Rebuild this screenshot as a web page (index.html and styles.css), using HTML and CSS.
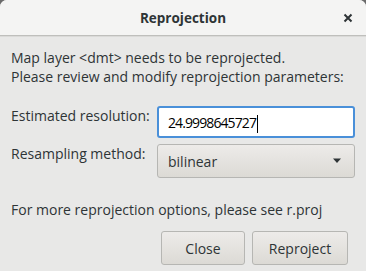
FILE: index.html
```html
<!DOCTYPE html>
<html lang="en">
  <head>
    <meta charset="UTF-8" />
    <title>Reprojection</title>
    <link rel="stylesheet" href="styles.css">
  </head>
  <body>
    <div class="dialog">
      <div class="titlebar">
        <span class="title">Reprojection</span>
        <span class="close">
          <svg width="10" height="10" viewBox="0 0 10 10">
            <path d="M1.5 1.5 L8.5 8.5 M8.5 1.5 L1.5 8.5" stroke="#2e3436" stroke-width="2" />
          </svg>
        </span>
      </div>

      <div class="content">
        <p class="message">
          Map layer &lt;dmt&gt; needs to be reprojected.<br>
          Please review and modify reprojection parameters:
        </p>

        <div class="form">
          <label class="label">Estimated resolution:</label>
          <div class="entry">24.9998645727<span class="caret"></span></div>

          <label class="label">Resampling method:</label>
          <div class="combo">
            <span>bilinear</span>
            <svg width="10" height="6" viewBox="0 0 10 6">
              <path d="M1 0.5 L9 0.5 L5 5 Z" fill="#2e3436" />
            </svg>
          </div>
        </div>

        <p class="hint">For more reprojection options, please see r.proj</p>

        <div class="actions">
          <button class="btn btn-close">Close</button>
          <button class="btn btn-reproject">Reproject</button>
        </div>
      </div>
    </div>
  </body>
</html>
```

FILE: styles.css
```css
html {
  background-color: #6b6b6b;
}

body {
  font-family: "Open Sans", "Noto Sans", sans-serif;
  font-size: 14px;
  color: #2e3436;
  margin: 0;
  padding: 0;
}

.dialog {
  width: 366px;
  height: 271px;
  background-color: #e8e8e7;
  border-radius: 7px 7px 0 0;
  overflow: hidden;
}

.titlebar {
  height: 35px;
  display: flex;
  align-items: center;
  justify-content: center;
  position: relative;
  background-color: #f4f4f3;
  border-bottom: 1px solid #bfbfbc;
  box-shadow: 0 1px 0 #dadad8;
}

.title {
  font-weight: bold;
  font-size: 13.5px;
}

.close {
  position: absolute;
  right: 13px;
  top: 13px;
  display: flex;
}

.content {
  padding: 12px 11px 0 11px;
}

.message {
  margin: 0;
  line-height: 19px;
}

.form {
  display: grid;
  grid-template-columns: 146px 198px;
  row-gap: 6px;
  margin-top: 20px;
}

.label {
  padding-top: 1px;
  line-height: 18px;
}

.entry {
  height: 32px;
  box-sizing: border-box;
  border: 2px solid #4a90d9;
  border-radius: 3px;
  background-color: white;
  padding: 5px 0 0 9px;
  color: #000;
  letter-spacing: -0.9px;
  display: flex;
  align-items: flex-start;
}

.caret {
  display: inline-block;
  width: 1px;
  height: 18px;
  margin-top: 2px;
  margin-left: 1px;
  background-color: #000;
}

.combo {
  height: 34px;
  box-sizing: border-box;
  border: 1px solid #b6b6b3;
  border-radius: 3px;
  background: linear-gradient(#edebe9, #dcdad5);
  display: flex;
  align-items: center;
  justify-content: space-between;
  padding: 0 12px 0 10px;
}

.hint {
  margin: 22px 0 0 0;
  line-height: 19px;
}

.actions {
  display: flex;
  justify-content: flex-end;
  gap: 7px;
  margin-top: 12px;
  padding-right: 7px;
}

.btn {
  font-family: inherit;
  font-size: 14px;
  color: #2e3436;
  height: 34px;
  border: 1px solid #b6b6b3;
  border-radius: 3px;
  background: linear-gradient(#edebe9, #dcdad5);
}

.btn-close {
  width: 84px;
}

.btn-reproject {
  width: 96px;
}
```
